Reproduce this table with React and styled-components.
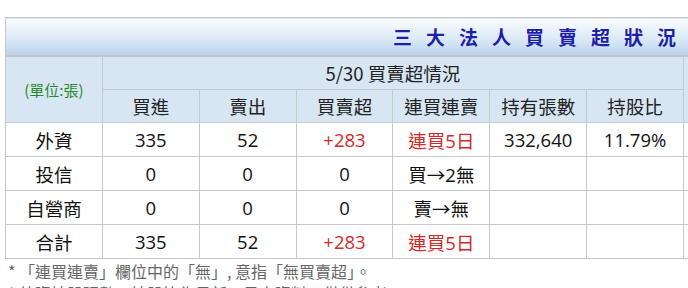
import styled, { createGlobalStyle } from "styled-components"

const GlobalStyle = createGlobalStyle`
    html, body {
        margin: 0;
        padding: 0;
        background: #fff;
        overflow: hidden;
    }
    body {
        font-family: "Open Sans", "Noto Sans CJK TC", sans-serif;
    }
`

const rows = [
    { name: "外資", buy: "335", sell: "52", net: "+283", netUp: true, streak: "連買5日", streakUp: true, hold: "332,640", ratio: "11.79%" },
    { name: "投信", buy: "0", sell: "0", net: "0", streak: "買→2無" },
    { name: "自營商", buy: "0", sell: "0", net: "0", streak: "賣→無" },
    { name: "合計", buy: "335", sell: "52", net: "+283", netUp: true, streak: "連買5日", streakUp: true },
]

const columns = ["買進", "賣出", "買賣超", "連買連賣", "持有張數", "持股比"]

export default function App() {
    return (
        <Page>
            <GlobalStyle />
            <Table>
                <colgroup>
                    {Array.from({ length: 8 }).map((_, i) => <col key={i} style={{ width: 96 }} />)}
                </colgroup>
                <thead>
                    <tr>
                        <TitleCell colSpan={8}>三大法人買賣超狀況</TitleCell>
                    </tr>
                    <tr>
                        <UnitCell rowSpan={2}>(單位:張)</UnitCell>
                        <HeadCell colSpan={6}>5/30 買賣超情況</HeadCell>
                        <HeadCell rowSpan={2}></HeadCell>
                    </tr>
                    <tr>
                        {columns.map(c => <HeadCell key={c}>{c}</HeadCell>)}
                    </tr>
                </thead>
                <tbody>
                    {rows.map(r => (
                        <tr key={r.name}>
                            <Cell>{r.name}</Cell>
                            <Cell>{r.buy}</Cell>
                            <Cell>{r.sell}</Cell>
                            <Cell $up={r.netUp}>{r.net}</Cell>
                            <Cell $up={r.streakUp}>{r.streak}</Cell>
                            <Cell>{r.hold}</Cell>
                            <Cell>{r.ratio}</Cell>
                            <Cell></Cell>
                        </tr>
                    ))}
                </tbody>
            </Table>
            <Notes>
                <Note>* 「連買連賣」欄位中的「無」, 意指「無買賣超」。</Note>
                <Note>* 外資持股張數、持股比為最新一日之資料，僅供參考。</Note>
            </Notes>
        </Page>
    )
}

const Page = styled.div`
    padding: 17px 0 0 5px;
    width: 900px;
`

const Table = styled.table`
    table-layout: fixed;
    width: 776px;
    border-collapse: collapse;
    border: 1px solid #c8c8c8;
`

const TitleCell = styled.th`
    height: 37px;
    padding: 0 90px 0 0;
    text-align: right;
    font-family: "Noto Sans CJK TC", sans-serif;
    font-size: 19px;
    font-weight: 700;
    letter-spacing: 14px;
    color: #1d1fa8;
    background: linear-gradient(to bottom, #fafcfe 0%, #dce9f6 55%, #b9d3ec 100%);
    border-bottom: 2px solid #c2c6ca;
`

const HeadCell = styled.th`
    height: 32px;
    padding: 0;
    font-weight: 400;
    font-size: 18.5px;
    color: #222;
    background: #d8e6f4;
    border: 1px solid #c8c8c8;
    text-align: center;
    font-family: "Noto Sans CJK TC", sans-serif;
    white-space: nowrap;
`

const UnitCell = styled(HeadCell)`
    color: #2a8a2a;
    font-size: 15px;
`

const Cell = styled.td`
    height: 33px;
    padding: 0;
    text-align: center;
    font-size: 18.5px;
    color: ${p => (p.$up ? "#d22a2a" : "#111")};
    border: 1px solid #c8c8c8;
    background: #fff;
    white-space: nowrap;
`

const Notes = styled.div`
    display: flex;
    flex-direction: column;
    gap: 2px;
    padding: 2px 0 0 3px;
`

const Note = styled.div`
    font-family: "Noto Sans CJK TC", sans-serif;
    font-size: 16px;
    line-height: 20px;
    color: #666;
    white-space: nowrap;
`
